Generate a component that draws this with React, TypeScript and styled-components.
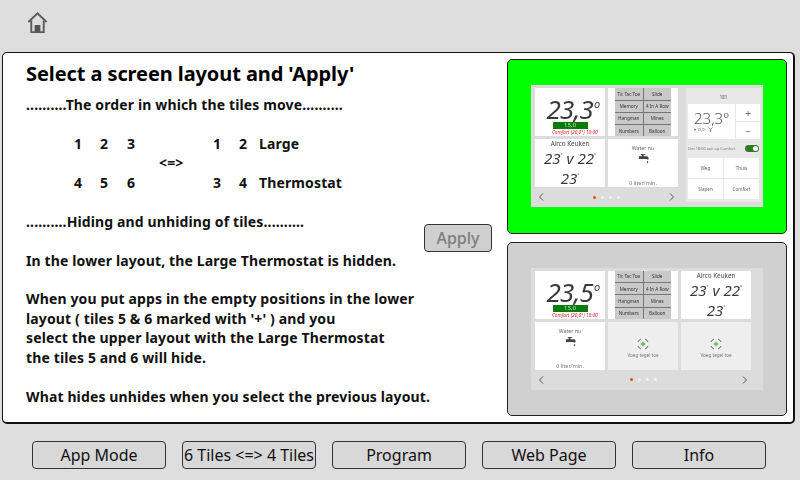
import styled, { createGlobalStyle } from "styled-components";

const GlobalStyle = createGlobalStyle`
  html, body {
    margin: 0;
    padding: 0;
    background: #dedede;
  }
  body {
    font-family: "Noto Sans", "Open Sans", "Liberation Sans", sans-serif;
  }
`;

const Page = styled.div`
  width: 800px;
  height: 480px;
  display: flex;
  flex-direction: column;
  overflow: hidden;
  background: #dedede;
`;

const Header = styled.div`
  height: 52px;
  flex: none;
  display: flex;
  align-items: flex-start;
  padding: 11px 0 0 26px;
  box-sizing: border-box;
`;

const Panel = styled.div`
  margin-left: 2px;
  width: 793px;
  height: 372px;
  box-sizing: border-box;
  flex: none;
  background: #fff;
  border: 1px solid #111;
  border-bottom-width: 2px;
  border-right-width: 2px;
  border-radius: 5px;
  display: flex;
  justify-content: space-between;
  padding: 6px 6px 6px 0;
`;

const TextSide = styled.div`
  flex: 1;
  display: grid;
`;

const TextBlock = styled.div`
  grid-area: 1 / 1;
  padding: 1px 0 0 23px;
  font-weight: 700;
  font-size: 14px;
  letter-spacing: 0.13px;
  line-height: 19.45px;
  color: #111;
  white-space: nowrap;
`;

const Title = styled.div`
  font-size: 20px;
  letter-spacing: -0.09px;
  line-height: 28px;
  margin-bottom: 7px;
  color: #000;
`;

const Line = styled.div<{ $gapBefore?: boolean }>`
  min-height: 19.45px;
  margin-top: ${(p) => (p.$gapBefore ? "19.45px" : "0")};
`;

const OrderGrid = styled.div`
  display: grid;
  grid-template-columns: 26px 27px 40px 46px 26px 20px auto;
  grid-auto-rows: 19.45px;
  margin: 19.45px 0 19.45px 48px;
`;

const Arrow = styled.div`
  grid-column: 4;
  grid-row: 2;
  font-size: 14px;
  margin-left: -8px;
`;

const ApplyButton = styled.button`
  grid-area: 1 / 1;
  justify-self: end;
  align-self: center;
  margin: 0 15px 0 0;
  width: 68px;
  height: 28px;
  padding: 0;
  background: #cfcfcf;
  border: 1px solid #333;
  border-radius: 4px;
  color: #7d7d7d;
  font-family: inherit;
  font-weight: 500;
  font-size: 16px;
`;

const PreviewColumn = styled.div`
  width: 280px;
  flex: none;
  display: flex;
  flex-direction: column;
  gap: 8px;
`;

const PreviewCard = styled.div<{ $selected?: boolean }>`
  height: 175px;
  box-sizing: border-box;
  display: flex;
  align-items: center;
  justify-content: center;
  background: ${(p) => (p.$selected ? "#00ff00" : "#d0d0d0")};
  border: 1px solid #222;
  border-radius: 5px;
`;

const MiniScreen = styled.div`
  width: 232px;
  height: 122px;
  box-sizing: border-box;
  background: #dcdcdc;
  padding: 3px 3px 0 4px;
  display: flex;
  gap: 8px;
  filter: blur(0.45px);
`;

const TileArea = styled.div`
  width: fit-content;
  flex: none;
  display: flex;
  flex-direction: column;
`;

const TileGrid = styled.div<{ $cols: number }>`
  display: grid;
  grid-template-columns: repeat(${(p) => p.$cols}, 70px);
  grid-auto-rows: 48px;
  gap: 3px;
`;

const Tile = styled.div`
  background: #fff;
  position: relative;
  display: flex;
  flex-direction: column;
  align-items: center;
  overflow: hidden;
  color: #444;
  font-size: 5.5px;
`;

const BigTemp = styled.div`
  font-style: italic;
  font-size: 26px;
  line-height: 26px;
  margin: 8px 0 0 6px;
  color: #3a3a3a;
  letter-spacing: -0.8px;
  sup {
    font-size: 11px;
    line-height: 0;
    vertical-align: 11px;
    margin-left: 1px;
  }
`;

const SetPoint = styled.div`
  width: 35px;
  height: 7px;
  background: #0a7a0a;
  color: #b8e8b8;
  font-size: 6px;
  line-height: 7px;
  text-align: center;
`;

const ComfortText = styled.div`
  align-self: flex-start;
  margin-left: 17px;
  color: #e8202a;
  font-style: italic;
  font-size: 4.8px;
  line-height: 6px;
  white-space: nowrap;
`;

const GamesGrid = styled.div`
  width: 56px;
  height: 48px;
  display: grid;
  grid-template-columns: 1fr 1fr;
  grid-template-rows: repeat(4, 1fr);
  gap: 1px;
  background: #777;
`;

const GameCell = styled.div`
  background: #c9c9c9;
  color: #333;
  font-size: 4.6px;
  display: flex;
  align-items: center;
  justify-content: center;
  white-space: nowrap;
`;

const AircoName = styled.div`
  font-size: 6.3px;
  line-height: 8px;
  margin-top: 1px;
  color: #444;
`;

const AircoTemp = styled.div`
  font-style: italic;
  font-size: 15px;
  line-height: 20px;
  color: #3a3a3a;
  white-space: nowrap;
  sup {
    font-size: 5px;
    line-height: 0;
    vertical-align: 7px;
  }
`;

const WaterLabel = styled.div`
  font-size: 5.2px;
  margin-top: 5px;
  margin-bottom: 1px;
  color: #666;
`;

const WaterFlow = styled.div`
  font-size: 5.4px;
  margin-top: 15px;
  color: #777;
`;

const AddTile = styled.div`
  background: #eeeeee;
  display: flex;
  flex-direction: column;
  align-items: center;
  justify-content: center;
  padding-top: 4px;
  color: #777;
  font-size: 4.6px;
  gap: 2px;
`;

const PagerRow = styled.div`
  flex: 1;
  display: flex;
  align-items: center;
  justify-content: space-between;
  padding: 0 3px;
  color: #555;
`;

const Dots = styled.div`
  display: flex;
  gap: 5px;
`;

const Dot = styled.span<{ $on?: boolean }>`
  width: 3px;
  height: 3px;
  border-radius: 50%;
  background: ${(p) => (p.$on ? "#e8491c" : "#f2f2f2")};
`;

const ThermoPanel = styled.div`
  width: 75px;
  height: 114px;
  background: #e8e8e8;
  padding: 0 2px;
  box-sizing: border-box;
  display: flex;
  flex-direction: column;
  flex: none;
`;

const ThermoName = styled.div`
  height: 16px;
  line-height: 18px;
  text-align: center;
  color: #555;
  font-size: 4.5px;
`;

const ThermoTop = styled.div`
  display: grid;
  grid-template-columns: 47px 24px;
  grid-template-rows: 17px 17px;
  gap: 1px;
`;

const ThermoMain = styled.div`
  grid-row: 1 / 3;
  background: #fff;
  padding-left: 6px;
  color: #555;
  font-size: 15px;
  line-height: 17px;
  font-weight: 300;
  padding-top: 6px;
  box-sizing: border-box;
  white-space: nowrap;
`;

const ThermoSmall = styled.div`
  display: flex;
  align-items: center;
  gap: 2px;
  font-size: 3.8px;
  line-height: 5px;
  color: #555;
  font-weight: 400;
`;

const StepButton = styled.div`
  background: #fff;
  color: #666;
  font-size: 10px;
  display: flex;
  align-items: center;
  justify-content: center;
`;

const ScheduleRow = styled.div`
  height: 19px;
  display: flex;
  align-items: center;
  justify-content: space-between;
  font-size: 3.9px;
  color: #777;
  white-space: nowrap;
`;

const Toggle = styled.div`
  width: 14px;
  height: 7px;
  border-radius: 4px;
  background: #2f7d22;
  display: flex;
  justify-content: flex-end;
  padding: 1px;
  box-sizing: border-box;
  &::after {
    content: "";
    width: 5px;
    height: 5px;
    border-radius: 50%;
    background: #fff;
  }
`;

const ModeGrid = styled.div`
  display: grid;
  grid-template-columns: 1fr 1fr;
  grid-template-rows: 20px 20px;
  gap: 1px;
`;

const ModeCell = styled.div`
  background: #fff;
  color: #666;
  font-size: 4.6px;
  display: flex;
  align-items: center;
  justify-content: center;
`;

const Footer = styled.div`
  flex: 1;
  display: flex;
  gap: 16px;
  padding: 17px 0 0 32px;
  box-sizing: border-box;
`;

const FooterButton = styled.button`
  width: 134px;
  height: 28px;
  padding: 0;
  background: #d8d8d8;
  border: 1px solid #333;
  border-radius: 4px;
  color: #111;
  font-family: inherit;
  font-size: 16px;
  white-space: nowrap;
`;

const HomeIcon = () => (
  <svg width="23" height="23" viewBox="0 0 24 24" fill="none" stroke="#5a5a5a" strokeWidth="2">
    <path d="M2.500 11.500 12 2.500l9.500 9" />
    <path d="M5.500 10v12h13V10" />
    <path d="M10.500 22v-6h3v6" strokeWidth="3" stroke="#555" />
  </svg>
);

const TapIcon = () => (
  <svg width="13" height="13" viewBox="0 0 12 12" fill="#444">
    <path d="M3 1h5v1H6v1.500h4c1 0 1.500 1 1.500 2.500v1H9.500V6.500H1V3.500h3V2H3z" />
    <rect x="9.700" y="9" width="1.300" height="2" />
  </svg>
);

const AddIcon = () => (
  <svg width="12" height="12" viewBox="0 0 11 11" fill="none" stroke="#555" strokeWidth="0.9">
    <path d="M1 3.500A5 5 0 0 1 3.500 1M7.500 1A5 5 0 0 1 10 3.500M10 7.500A5 5 0 0 1 7.500 10M3.500 10A5 5 0 0 1 1 7.500" />
    <path d="M5.500 3.500v4M3.500 5.500h4" stroke="#6ab04a" strokeWidth="1.200" />
  </svg>
);

const LeafIcon = () => (
  <svg width="5" height="5" viewBox="0 0 5 5" fill="none" stroke="#4a9a3a" strokeWidth="0.9">
    <path d="M2.500 5V2.500M.5.500l2 2 2-2" />
  </svg>
);

const Chevron = ({ left }: { left?: boolean }) => (
  <svg width="6" height="8" viewBox="0 0 6 8" fill="none" stroke="#555" strokeWidth="1">
    <path d={left ? "M5 .5 1.500 4 5 7.500" : "M1 .5 4.500 4 1 7.500"} />
  </svg>
);

const games = [
  "Tic Tac Toe", "Slide",
  "Memory", "4 In A Row",
  "Hangman", "Mines",
  "Numbers", "Balloon",
];

const orderRows = [
  ["1", "2", "3", "", "1", "2", "Large"],
  ["", "", "", "<=>", "", "", ""],
  ["4", "5", "6", "", "3", "4", "Thermostat"],
];

const footerLabels = ["App Mode", "6 Tiles <=> 4 Tiles", "Program", "Web Page", "Info"];

const TempTile = ({ value }: { value: string }) => (
  <Tile>
    <BigTemp>
      {value}
      <sup>o</sup>
    </BigTemp>
    <SetPoint>15,0</SetPoint>
    <ComfortText>Comfort (20,0°) 18:00</ComfortText>
  </Tile>
);

const GamesTile = () => (
  <Tile>
    <GamesGrid>
      {games.map((g) => (
        <GameCell key={g}>{g}</GameCell>
      ))}
    </GamesGrid>
  </Tile>
);

const AircoTile = () => (
  <Tile>
    <AircoName>Airco Keuken</AircoName>
    <AircoTemp>
      23<sup>°</sup> v 22<sup>°</sup>
    </AircoTemp>
    <AircoTemp>
      23<sup>°</sup>
    </AircoTemp>
  </Tile>
);

const WaterTile = () => (
  <Tile>
    <WaterLabel>Water nu</WaterLabel>
    <TapIcon />
    <WaterFlow>0 liter/min.</WaterFlow>
  </Tile>
);

const Pager = () => (
  <PagerRow>
    <Chevron left />
    <Dots>
      <Dot $on />
      <Dot />
      <Dot />
      <Dot />
    </Dots>
    <Chevron />
  </PagerRow>
);

const ThermostatPanel = () => (
  <ThermoPanel>
    <ThermoName>181</ThermoName>
    <ThermoTop>
      <ThermoMain>
        23,3°
        <ThermoSmall>
          ▾ 15,0°
          <LeafIcon />
        </ThermoSmall>
      </ThermoMain>
      <StepButton>+</StepButton>
      <StepButton>−</StepButton>
    </ThermoTop>
    <ScheduleRow>
      Om 18:00 aan op Comfort
      <Toggle />
    </ScheduleRow>
    <ModeGrid>
      <ModeCell>Weg</ModeCell>
      <ModeCell>Thuis</ModeCell>
      <ModeCell>Slapen</ModeCell>
      <ModeCell>Comfort</ModeCell>
    </ModeGrid>
  </ThermoPanel>
);

export default function App() {
  return (
    <>
      <GlobalStyle />
      <Page>
        <Header>
          <HomeIcon />
        </Header>
        <Panel>
          <TextSide>
            <TextBlock>
              <Title>Select a screen layout and 'Apply'</Title>
              <Line>..........The order in which the tiles move..........</Line>
              <OrderGrid>
                {orderRows.flatMap((row, r) =>
                  row.map((cell, c) =>
                    cell === "<=>" ? (
                      <Arrow key={`${r}-${c}`}>{"<=>"}</Arrow>
                    ) : (
                      <div key={`${r}-${c}`}>{cell}</div>
                    )
                  )
                )}
              </OrderGrid>
              <Line>..........Hiding and unhiding of tiles..........</Line>
              <Line $gapBefore>In the lower layout, the Large Thermostat is hidden.</Line>
              <Line $gapBefore>When you put apps in the empty positions in the lower</Line>
              <Line>layout ( tiles 5 &amp; 6 marked with '+' ) and you</Line>
              <Line>select the upper layout with the Large Thermostat</Line>
              <Line>the tiles 5 and 6 will hide.</Line>
              <Line $gapBefore>What hides unhides when you select the previous layout.</Line>
            </TextBlock>
            <ApplyButton>Apply</ApplyButton>
          </TextSide>
          <PreviewColumn>
            <PreviewCard $selected>
              <MiniScreen>
                <TileArea>
                  <TileGrid $cols={2}>
                    <TempTile value="23,3" />
                    <GamesTile />
                    <AircoTile />
                    <WaterTile />
                  </TileGrid>
                  <Pager />
                </TileArea>
                <ThermostatPanel />
              </MiniScreen>
            </PreviewCard>
            <PreviewCard>
              <MiniScreen>
                <TileArea>
                  <TileGrid $cols={3}>
                    <TempTile value="23,5" />
                    <GamesTile />
                    <AircoTile />
                    <WaterTile />
                    <AddTile>
                      <AddIcon />
                      Voeg tegel toe
                    </AddTile>
                    <AddTile>
                      <AddIcon />
                      Voeg tegel toe
                    </AddTile>
                  </TileGrid>
                  <Pager />
                </TileArea>
              </MiniScreen>
            </PreviewCard>
          </PreviewColumn>
        </Panel>
        <Footer>
          {footerLabels.map((label) => (
            <FooterButton key={label}>{label}</FooterButton>
          ))}
        </Footer>
      </Page>
    </>
  );
}
